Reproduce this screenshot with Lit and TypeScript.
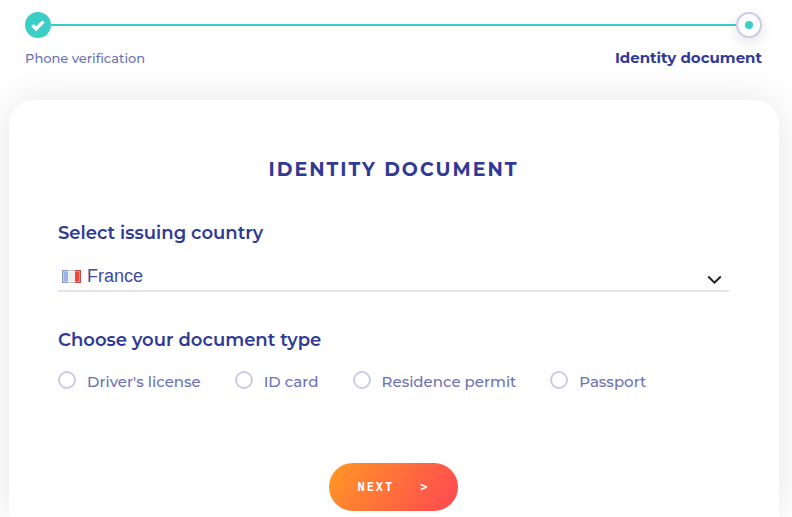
import { LitElement, html, css } from "lit";
import { customElement, state } from "lit/decorators.js";

const DOCUMENT_TYPES = ["Driver's license", "ID card", "Residence permit", "Passport"];

@customElement("progress-steps")
class ProgressSteps extends LitElement {
  static styles = css`
    :host {
      display: block;
      padding: 12px 30px 0 25px;
    }
    .track {
      display: flex;
      align-items: center;
    }
    .line {
      flex: 1;
      height: 2px;
      background: #39cfc6;
    }
    .dot {
      box-sizing: border-box;
      width: 26px;
      height: 26px;
      border-radius: 50%;
      display: flex;
      align-items: center;
      justify-content: center;
    }
    .done {
      background: #39cfc6;
    }
    .current {
      background: #fff;
      border: 2px solid #cbcbe6;
      box-shadow: 0 4px 14px rgba(0, 0, 0, 0.12);
    }
    .current::before {
      content: "";
      width: 8px;
      height: 8px;
      border-radius: 50%;
      background: #39cfc6;
    }
    .labels {
      display: flex;
      justify-content: space-between;
      align-items: baseline;
      margin-top: 10px;
      line-height: 20px;
      font-size: 13px;
      font-weight: 500;
      color: #6c72b6;
    }
    .active {
      font-size: 15px;
      font-weight: 700;
      color: #303a96;
    }
  `;

  render() {
    return html`
      <div class="track">
        <span class="dot done">
          <svg width="16" height="14" viewBox="0 0 16 14" aria-hidden="true">
            <path d="M2.5 7.2 6.2 10.8 13.5 3.4" fill="none" stroke="#fff" stroke-width="3.4" />
          </svg>
        </span>
        <span class="line"></span>
        <span class="dot current"></span>
      </div>
      <div class="labels">
        <span>Phone verification</span>
        <span class="active">Identity document</span>
      </div>
    `;
  }
}

@customElement("app-root")
class AppRoot extends LitElement {
  @state() private selected = "";

  static styles = css`
    :host {
      display: flex;
      flex-direction: column;
      min-height: 100vh;
      overflow: hidden;
      background: #fff;
      font-family: Montserrat, Inter, sans-serif;
      color: #303a96;
    }
    .card {
      flex: 1;
      display: flex;
      flex-direction: column;
      margin: 32px 13px 0 9px;
      padding: 56px 50px 6px 49px;
      background: #fff;
      border-radius: 24px 24px 0 0;
      box-shadow: 0 0 40px rgba(0, 0, 0, 0.1);
    }
    h1 {
      margin: 0;
      text-align: center;
      font-size: 19px;
      line-height: 28px;
      font-weight: 700;
      letter-spacing: 2px;
    }
    .heading {
      display: block;
      padding: 0;
      font-size: 18px;
      line-height: 24px;
      font-weight: 600;
    }
    .country {
      margin-top: 37px;
    }
    .field {
      position: relative;
      margin-top: 15px;
    }
    select {
      appearance: none;
      display: block;
      box-sizing: border-box;
      width: 100%;
      height: 32px;
      padding: 2px 32px 0 29px;
      border: 0;
      border-bottom: 2px solid #e2e2f2;
      border-radius: 0;
      background: transparent;
      font-family: "Liberation Sans", Arial, sans-serif;
      font-size: 18px;
      color: #414a9f;
    }
    .flag,
    .chevron {
      position: absolute;
      pointer-events: none;
    }
    .flag {
      left: 4px;
      top: 10px;
    }
    .chevron {
      right: 7px;
      top: 15px;
    }
    fieldset {
      margin: 36px 0 0;
      padding: 0;
      border: 0;
      min-width: 0;
    }
    .options {
      display: flex;
      flex-wrap: wrap;
      gap: 12px 34px;
      margin-top: 18px;
    }
    .option {
      display: flex;
      align-items: center;
      gap: 11px;
      font-size: 15px;
      line-height: 24px;
      font-weight: 500;
      color: #6c72b6;
    }
    .option input {
      appearance: none;
      box-sizing: border-box;
      width: 18px;
      height: 18px;
      margin: 0 0 4px;
      border: 2px solid #cbcbe6;
      border-radius: 50%;
    }
    .option input:checked {
      background: radial-gradient(#39cfc6 4px, transparent 5px);
    }
    .next {
      align-self: center;
      display: flex;
      align-items: center;
      gap: 26px;
      height: 48px;
      margin-top: 69px;
      padding: 0 28px;
      border: 0;
      border-radius: 24px;
      background: linear-gradient(120deg, #ff9326 5%, #ff4f4e 90%);
      color: #fff;
      font-family: "DejaVu Sans Mono", monospace;
      font-size: 12px;
      font-weight: 700;
      letter-spacing: 2px;
    }
  `;

  render() {
    return html`
      <progress-steps></progress-steps>
      <main class="card">
        <h1>IDENTITY DOCUMENT</h1>
        <label class="heading country" for="country">Select issuing country</label>
        <div class="field">
          <select id="country">
            <option>France</option>
          </select>
          <svg class="flag" width="19" height="13" viewBox="0 0 19 13" aria-hidden="true">
            <rect width="7" height="13" fill="#9db5e4" />
            <rect x="6" width="7" height="13" fill="#eeeeee" />
            <rect x="13" width="6" height="13" fill="#e8483f" />
            <rect x="1.5" y="1.5" width="16" height="10" fill="none" stroke="#fff" opacity="0.3" />
            <rect x="0.5" y="0.5" width="18" height="12" fill="none" stroke="#555" opacity="0.25" />
          </svg>
          <svg class="chevron" width="15" height="10" viewBox="0 0 15 10" aria-hidden="true">
            <path d="M1.2 1.5 7.5 7.6 13.8 1.5" fill="none" stroke="#222" stroke-width="2" />
          </svg>
        </div>
        <fieldset>
          <legend class="heading">Choose your document type</legend>
          <div class="options">
            ${DOCUMENT_TYPES.map(
              (type) => html`
                <label class="option">
                  <input
                    type="radio"
                    name="document"
                    .checked=${this.selected === type}
                    @change=${() => (this.selected = type)}
                  />
                  <span>${type}</span>
                </label>
              `
            )}
          </div>
        </fieldset>
        <button class="next" type="button"><span>NEXT</span><span>&gt;</span></button>
      </main>
    `;
  }
}
